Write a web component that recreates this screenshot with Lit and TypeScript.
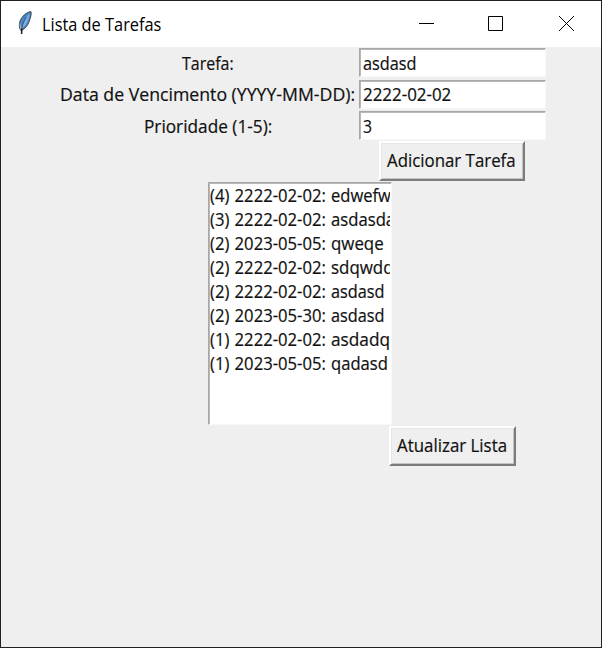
import { LitElement, html, css, svg } from "lit";
import { customElement, property } from "lit/decorators.js";

/* One line of text condensed or stretched to a given advance width. */
@customElement("fit-text")
class FitText extends LitElement {
  @property() text = "";
  @property({ type: Number }) width = 0;
  static styles = css`
    :host { display: block; white-space: pre; overflow: visible; }
    .t { display: inline-block; transform-origin: 0 50%; }
  `;
  render() {
    return html`<span class="t">${this.text}</span>`;
  }
  updated() {
    this.style.width = this.width + "px";
    const t = this.renderRoot.querySelector(".t") as HTMLElement;
    t.style.transform = `scaleX(${this.width / t.offsetWidth})`;
  }
}

const feather = svg`
  <path d="M13.9 .6C9.500 1.100 4.300 5.500 2.700 11.300C1.900 14.700 2.500 17.600 3.800 19.600C8.300 18.300 11.500 13.500 12.800 8.500C13.800 5.200 14.700 2.500 13.900 .6Z" fill="#4b83c3" stroke="#3f4650" stroke-width="1"/>
  <path d="M12.900 2.200C9 5.500 6.500 11 5 17C8.500 15.500 10.800 10.500 11.600 7.500Z" fill="#78b0e8"/>
  <path d="M2.800 11.500C2.300 14.500 2.700 17.500 3.800 19.300L4.700 16.500Z" fill="#a5a7aa"/>
  <path d="M9.500 6C7 9.500 5.300 14 4.700 18" fill="none" stroke="#2d4a6e" stroke-width=".8"/>
  <path d="M4.800 17.500L4.600 23" fill="none" stroke="#1d222a" stroke-width="1.500"/>`;

const fields = [
  { label: "Tarefa:", lw: 52, value: "asdasd", vw: 54 },
  { label: "Data de Vencimento (YYYY-MM-DD):", lw: 295, value: "2222-02-02", vw: 88 },
  { label: "Prioridade (1-5):", lw: 128, value: "3", vw: 9 },
];

const tasks = [
  { d: "(4) 2222-02-02:", n: "edwefwe", w: 69 },
  { d: "(3) 2222-02-02:", n: "asdasdasd", w: 82 },
  { d: "(2) 2023-05-05:", n: "qweqe", w: 53 },
  { d: "(2) 2222-02-02:", n: "sdqwdqwd", w: 86 },
  { d: "(2) 2222-02-02:", n: "asdasd", w: 54 },
  { d: "(2) 2023-05-30:", n: "asdasd", w: 54 },
  { d: "(1) 2222-02-02:", n: "asdadqz", w: 67 },
  { d: "(1) 2023-05-05:", n: "qadasd", w: 57 },
];

@customElement("app-root")
class AppRoot extends LitElement {
  static styles = css`
    :host {
      display: block; box-sizing: border-box; width: 602px; height: 648px;
      border: 1px solid #231f20; background: #efefef; overflow: hidden;
      font: 17.5px/24px "Open Sans", "Noto Sans", sans-serif; color: #111;
      -webkit-text-stroke: .2px #111;
    }
    .title {
      height: 46px; background: #fff; display: flex; align-items: center; color: #000;
      -webkit-text-stroke: 0;
    }
    .feather { width: 16px; height: 24px; margin: 0 9px 3px 16px; flex: none; }
    .caption { font-size: 18px; }
    .controls { margin-left: auto; display: flex; }
    .ctl { width: 70px; height: 46px; display: block; }
    .ctl path { fill: none; stroke: #000; stroke-width: 1; }
    .row { display: grid; grid-template-columns: 358px 187px; height: 31.5px; align-items: start; }
    .form { padding-top: 1px; height: 93px; }
    .cell { display: flex; justify-content: center; padding-left: 55px; padding-top: 2px; }
    .entry {
      box-sizing: border-box; height: 29px; background: #fff; padding: 1px 1px 0 3px;
      border: 1px solid; border-color: #a7a7a7 #f8f8f8 #f8f8f8 #a7a7a7;
      box-shadow: inset 1px 1px #b8b8b8;
    }
    .row:nth-child(odd) .cell { padding-top: 3px; }
    .row:nth-child(odd) .entry { padding-top: 2px; }
    .btn {
      box-sizing: border-box; height: 40px; padding: 0 0 2px 6px; display: flex; align-items: center;
      font: inherit; color: inherit; background: #efefef; text-align: left;
      border: 2px solid; border-color: #fff #7c7c7c #7c7c7c #fff;
      box-shadow: inset 1px 1px #e5e5e5, inset -1px -1px #c4c4c4;
    }
    .add { width: 146px; margin-left: 378px; }
    .refresh { width: 127px; margin: 1px 0 0 388px; }
    .list {
      box-sizing: border-box; width: 184px; height: 243px; margin: 1px 0 0 207px;
      background: #fff; border: 1px solid; border-color: #a7a7a7 #f8f8f8 #f8f8f8 #a7a7a7;
      box-shadow: inset 1px 1px #b8b8b8; padding: 0 1px 0 1px;
    }
    .items { overflow: hidden; height: 240px; }
    .item { display: flex; gap: 5px; height: 24px; }
    .item fit-text { flex: none; }
    .when { word-spacing: 1px; }
  `;
  render() {
    return html`
      <div class="title">
        <svg class="feather" viewBox="0 0 16 24">${feather}</svg>
        <fit-text class="caption" text="Lista de Tarefas" .width=${119}></fit-text>
        <div class="controls">
          <svg class="ctl" viewBox="0 0 70 46"><path d="M28 22.500H43"/></svg>
          <svg class="ctl" viewBox="0 0 70 46"><path d="M27.500 15.500H41.500V29.500H27.500Z"/></svg>
          <svg class="ctl" viewBox="0 0 70 46"><path d="M28 15L43 30M43 15L28 30"/></svg>
        </div>
      </div>
      <div class="form">
        ${fields.map((f) => html`
          <div class="row">
            <div class="cell"><fit-text .text=${f.label} .width=${f.lw}></fit-text></div>
            <div class="entry"><fit-text .text=${f.value} .width=${f.vw}></fit-text></div>
          </div>`)}
      </div>
      <button class="btn add"><fit-text text="Adicionar Tarefa" .width=${129}></fit-text></button>
      <div class="list">
        <div class="items">
          ${tasks.map((t) => html`
            <div class="item">
              <fit-text class="when" .text=${t.d} .width=${116}></fit-text>
              <fit-text .text=${t.n} .width=${t.w}></fit-text>
            </div>`)}
        </div>
      </div>
      <button class="btn refresh"><fit-text text="Atualizar Lista" .width=${110}></fit-text></button>
    `;
  }
}
